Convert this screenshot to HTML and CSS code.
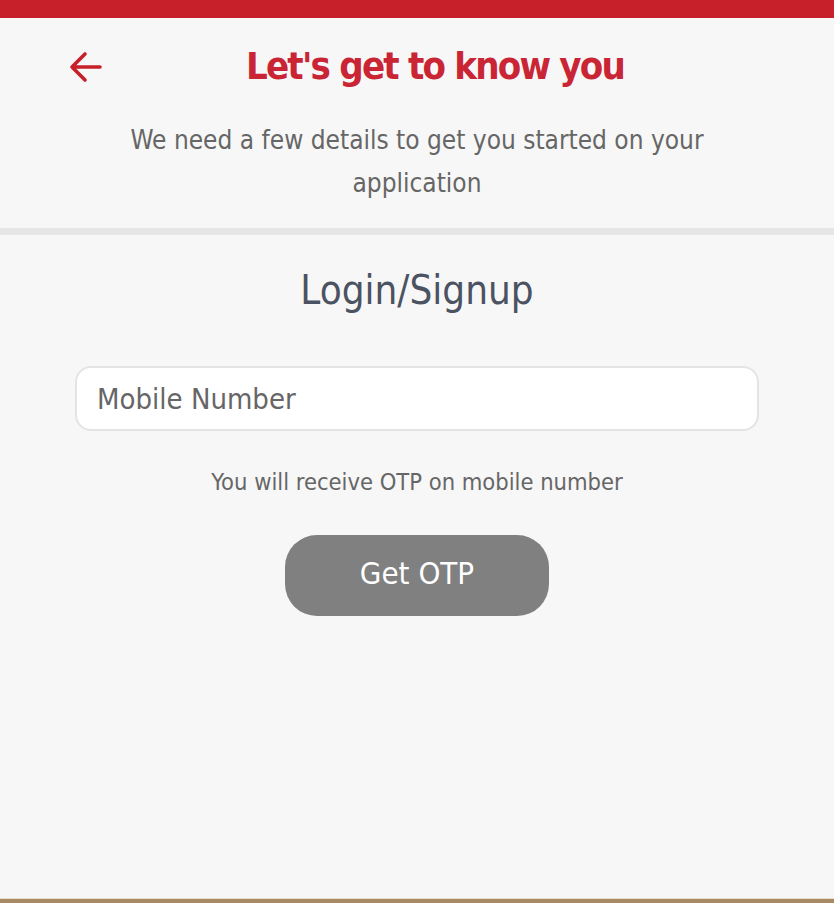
FILE: index.html
```html
<!DOCTYPE html>
<html>
<head>
<meta charset="utf-8">
<link rel="stylesheet" href="styles.css">
</head>
<body>
<div class="topbar"></div>
<header class="header">
  <div class="title-row">
    <button class="back" aria-label="Back">
      <svg width="36" height="36" viewBox="0 0 36 36"><path d="M32 17H5M17 4L4 17L17 30" fill="none" stroke="#c8202a" stroke-width="3.6" stroke-linecap="round" stroke-linejoin="round"/></svg>
    </button>
    <h1 class="title">Let's get to know you</h1>
  </div>
  <p class="subtitle">We need a few details to get you started on your application</p>
</header>
<div class="divider"></div>
<main class="content">
  <h2 class="section-title">Login/Signup</h2>
  <div class="field"><input class="input" type="text" placeholder="Mobile Number"></div>
  <p class="hint">You will receive OTP on mobile number</p>
  <button class="otp-btn">Get OTP</button>
</main>
<div class="bottombar"></div>
</body>
</html>
```
FILE: styles.css
```css
* { box-sizing: border-box; }
html, body { margin: 0; padding: 0; }
body {
  width: 834px;
  height: 903px;
  background: #f7f7f7;
  font-family: "DejaVu Sans Condensed", "DejaVu Sans", sans-serif;
  display: flex;
  flex-direction: column;
  overflow: hidden;
}
.topbar { height: 18px; background: #c8202a; flex: none; }
.header { padding-top: 24px; }
.title-row {
  position: relative;
  display: flex;
  justify-content: center;
  height: 48px;
}
.back {
  position: absolute;
  left: 68px;
  top: 8px;
  border: 0;
  background: none;
  padding: 0;
  width: 36px;
  height: 36px;
}
.title {
  margin: 0;
  margin-left: 36px;
  font-size: 38px;
  font-weight: bold;
  color: #c92535;
  line-height: 48px;
  letter-spacing: -1.8px;
}
.subtitle {
  margin: 29px auto 0;
  width: 620px;
  text-align: center;
  font-size: 26px;
  line-height: 43px;
  color: #666;
  height: 109px;
}
.divider { height: 7px; background: #e6e6e6; flex: none; }
.content {
  flex: 1;
  display: flex;
  flex-direction: column;
  align-items: center;
  padding-top: 30px;
}
.section-title {
  margin: 0;
  font-size: 40px;
  font-weight: normal;
  color: #4b5262;
  line-height: 50px;
}
.field { margin-top: 51px; width: 684px; }
.input {
  width: 100%;
  height: 65px;
  border: 2px solid #e4e4e4;
  border-radius: 16px;
  background: #fff;
  padding: 0 20px;
  font-family: inherit;
  font-size: 29px;
  color: #333;
  outline: none;
}
.input::placeholder { color: #666; }
.hint {
  margin: 36px 0 0;
  font-size: 23.5px;
  color: #666;
  line-height: 30px;
}
.otp-btn {
  margin-top: 38px;
  width: 264px;
  height: 81px;
  border: 0;
  border-radius: 32px;
  background: #808080;
  color: #fff;
  font-family: inherit;
  font-size: 31px;
  padding: 0 0 6px;
}
.bottombar {
  height: 5px;
  flex: none;
  background: #a88a66;
  border-top: 1px solid #e8dccb;
}
```
